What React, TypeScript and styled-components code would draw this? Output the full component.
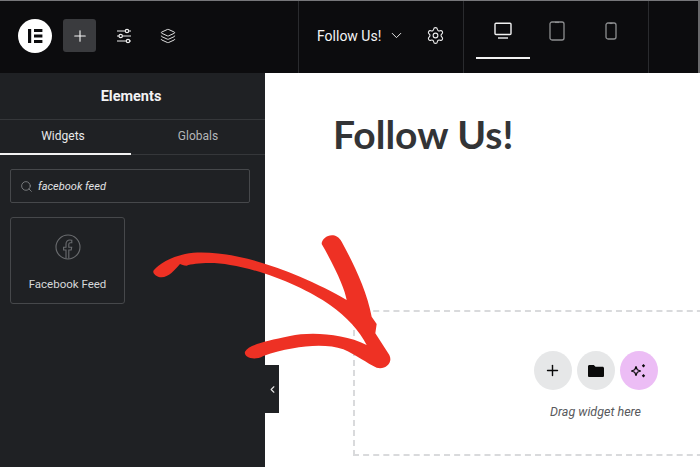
import React from "react";
import styled, { createGlobalStyle } from "styled-components";
import { Plus, Layers, Settings, ChevronDown, ChevronLeft, Search } from "lucide-react";

const Global = createGlobalStyle`
  html, body { margin: 0; padding: 0; width: 700px; height: 467px; overflow: hidden; background: #fff; }
  * { box-sizing: border-box; }
  body { font-family: Roboto, "Liberation Sans", sans-serif; }
`;

const Page = styled.div`
  position: relative;
  width: 700px;
  height: 467px;
  display: flex;
  flex-direction: column;
  overflow: hidden;
`;
const TopBar = styled.header`
  height: 73px;
  flex: none;
  display: flex;
  background: #0c0c0e;
  border-top: 1px solid #77777a;
  border-right: 2px solid #6a6a6c;
  color: #fff;
`;
const Section = styled.div<{ $w: number }>`
  width: ${(p) => p.$w}px;
  flex: none;
  display: flex;
  align-items: center;
  padding-bottom: 3px;
  border-right: 1px solid #2a2b2e;
`;
const LogoSection = styled(Section)`
  padding-left: 18px;
`;
const Logo = styled.div`
  width: 34px;
  height: 34px;
  border-radius: 50%;
  background: #fff;
  color: #0c0c0e;
  flex: none;
  margin-right: 11px;
  display: flex;
`;
const AddButton = styled.div`
  width: 33px;
  height: 33px;
  border-radius: 3px;
  background: #3a3b3e;
  display: flex;
  align-items: center;
  justify-content: center;
  margin-right: 20px;
`;
const ToolIcon = styled.div`
  display: flex;
  margin-right: 28px;
`;
const DocSection = styled(Section)`
  padding-left: 18px;
`;
const DocTitle = styled.span`
  font-size: 14px;
  color: #f4f4f5;
  margin-right: 7px;
`;
const DocCaret = styled.div`
  display: flex;
  margin-right: 21px;
`;
const DeviceSection = styled(Section)`
  padding: 0 0 0 12px;
  align-items: stretch;
`;
const DeviceTab = styled.div<{ $active?: boolean }>`
  width: 54px;
  display: flex;
  align-items: center;
  justify-content: center;
  padding-top: 3px;
  margin-bottom: 14px;
  border-bottom: 2px solid ${(p) => (p.$active ? "#f2f2f2" : "transparent")};
`;
const Body = styled.div`
  flex: 1;
  display: flex;
  min-height: 0;
`;
const Panel = styled.aside`
  width: 265px;
  flex: none;
  background: #1f2124;
  display: flex;
  flex-direction: column;
`;
const PanelTitle = styled.div`
  height: 47px;
  flex: none;
  display: flex;
  align-items: center;
  justify-content: center;
  padding-right: 3px;
  font-size: 14.5px;
  font-weight: 700;
  color: #f3f3f4;
  border-bottom: 1px solid #35373a;
`;
const Tabs = styled.div`
  height: 35px;
  flex: none;
  display: flex;
  border-bottom: 1px solid #35373a;
`;
const Tab = styled.div<{ $active?: boolean }>`
  width: ${(p) => (p.$active ? "131px" : "134px")};
  padding-right: ${(p) => (p.$active ? "5px" : "0")};
  flex: none;
  height: 35px;
  display: flex;
  align-items: center;
  justify-content: center;
  font-size: 12px;
  padding-bottom: 1px;
  color: ${(p) => (p.$active ? "#e8e9ea" : "#b4b6b9")};
  border-bottom: 2px solid ${(p) => (p.$active ? "#f2f2f2" : "transparent")};
`;
const SearchBox = styled.div`
  margin: 14px 15px 0 10px;
  height: 34px;
  border: 1px solid #46484b;
  border-radius: 2px;
  display: flex;
  align-items: center;
  padding-left: 9px;
  color: #8f9194;
  gap: 5px;
`;
const SearchText = styled.span`
  font-size: 11px;
  font-style: italic;
  color: #e2e3e5;
`;
const WidgetCard = styled.div`
  margin: 14px 0 0 10px;
  width: 115px;
  height: 87px;
  border: 1px solid #46484b;
  border-radius: 3px;
  display: flex;
  flex-direction: column;
  align-items: center;
  padding-top: 16px;
`;
const WidgetLabel = styled.div`
  margin-top: 17px;
  font-size: 11.5px;
  color: #d6d8da;
`;
const Canvas = styled.main`
  flex: 1;
  background: #fff;
  display: flex;
  flex-direction: column;
  min-width: 0;
`;
const Heading = styled.h1`
  margin: 38px 0 0 68px;
  font-family: Lato, sans-serif;
  font-weight: 700;
  font-size: 39px;
  line-height: 47px;
  color: #333436;
`;
const DropZone = styled.div`
  margin: 152px 0 0 88px;
  height: 146px;
  width: 360px;
  border: 2px dashed #d9dadc;
  display: flex;
  padding: 39px 0 0 178px;
`;
const DropCluster = styled.div`
  width: 125px;
  display: flex;
  flex-direction: column;
  align-items: center;
`;
const RoundRow = styled.div`
  display: flex;
  gap: 5px;
`;
const RoundButton = styled.div<{ $bg: string }>`
  width: 38px;
  height: 39px;
  border-radius: 50%;
  background: ${(p) => p.$bg};
  display: flex;
  align-items: center;
  justify-content: center;
  color: #0a0a0a;
`;
const DropHint = styled.div`
  margin-top: 14px;
  font-size: 12.500px;
  font-style: italic;
  color: #58595c;
`;
const Collapse = styled.div`
  position: absolute;
  left: 265px;
  top: 365px;
  width: 14px;
  height: 48px;
  background: #1f2124;
  display: flex;
  align-items: center;
  justify-content: center;
  color: #e8e8e8;
`;
const ArrowArt = styled.svg`
  position: absolute;
  left: 150px;
  top: 220px;
  width: 260px;
  height: 170px;
  pointer-events: none;
`;

const ElementorMark = () => (
  <svg width="34" height="34" viewBox="0 0 34 34" fill="currentColor">
    <rect x="10" y="10" width="3.2" height="14" />
    <rect x="16" y="10" width="8.400" height="3" />
    <rect x="16" y="15.500" width="8.400" height="3" />
    <rect x="16" y="21" width="8.400" height="3" />
  </svg>
);
const SlidersIcon = () => (
  <svg width="16" height="16" viewBox="0 0 16 16" fill="#0c0c0e" stroke="#ececec" strokeWidth="1.200">
    <path d="M1 3h14M1 8h14M1 13h14" />
    <circle cx="11" cy="3" r="1.700" />
    <circle cx="4.700" cy="8" r="1.700" />
    <circle cx="12" cy="13" r="1.700" />
  </svg>
);
const Desktop = () => (
  <svg width="18" height="18" viewBox="0 0 18 18" fill="none" stroke="#f2f2f2" strokeWidth="1.400">
    <rect x="1" y="1.300" width="16" height="11.200" rx="1" />
    <path d="M4 16h10" />
  </svg>
);
const TabletIcon = () => (
  <svg width="16" height="20" viewBox="0 0 16 20" fill="none" stroke="#8d8e90" strokeWidth="1.300">
    <rect x="1" y="1" width="14" height="18" rx="2" />
    <path d="M6 1.400h4" />
  </svg>
);
const PhoneIcon = () => (
  <svg width="12" height="18" viewBox="0 0 12 18" fill="none" stroke="#8d8e90" strokeWidth="1.300">
    <rect x="1" y="1" width="10" height="16" rx="2" />
    <path d="M4.500 1.400h3" />
  </svg>
);
const FacebookOutline = () => (
  <svg width="26" height="26" viewBox="0 0 26 26" fill="none" stroke="#6a6c6f" strokeWidth="1.100">
    <circle cx="13" cy="13" r="12" />
    <path d="M11 24.600V16H8.600v-2.800H11V10c0-2.600 1.500-4 3.800-4 .8 0 1.600.1 2 .2v2.500h-1.400c-1.200 0-1.600.6-1.600 1.500v3h2.900l-.5 2.800H13.800v8.600" />
  </svg>
);
const FolderIcon = () => (
  <svg width="16" height="14" viewBox="0 0 16 14" fill="currentColor">
    <path d="M1.500 1h4.300l1.700 1.800h7c.8 0 1.500.7 1.500 1.400v7.800c0 .7-.7 1-1.500 1H1.500C.7 13 0 12.700 0 12V2.400C0 1.600.7 1 1.500 1z" />
  </svg>
);
const SparkIcon = () => (
  <svg width="16" height="16" viewBox="0 0 16 16" fill="currentColor">
    <path
      d="M5 3.500 6.300 6.700 9.500 8 6.300 9.300 5 12.500 3.700 9.300 .5 8 3.700 6.700z"
      fill="none"
      stroke="currentColor"
      strokeWidth="1.200"
      strokeLinejoin="round"
    />
    <path d="M12.500 1l1.700 1.700-1.700 1.700-1.700-1.700z" />
    <path d="M12.500 11l1.700 1.700-1.700 1.700-1.700-1.700z" />
  </svg>
);

export default function App() {
  return (
    <Page>
      <Global />
      <TopBar>
        <LogoSection $w={299}>
          <Logo>
            <ElementorMark />
          </Logo>
          <AddButton>
            <Plus size={18} strokeWidth={1.500} color="#f5f5f5" />
          </AddButton>
          <ToolIcon>
            <SlidersIcon />
          </ToolIcon>
          <ToolIcon>
            <Layers size={16} strokeWidth={1.400} color="#ececec" />
          </ToolIcon>
        </LogoSection>
        <DocSection $w={165}>
          <DocTitle>Follow Us!</DocTitle>
          <DocCaret>
            <ChevronDown size={17} strokeWidth={1.400} color="#e8e8e8" />
          </DocCaret>
          <Settings size={19} strokeWidth={1.400} color="#ececec" />
        </DocSection>
        <DeviceSection $w={185}>
          <DeviceTab $active>
            <Desktop />
          </DeviceTab>
          <DeviceTab>
            <TabletIcon />
          </DeviceTab>
          <DeviceTab>
            <PhoneIcon />
          </DeviceTab>
        </DeviceSection>
      </TopBar>
      <Body>
        <Panel>
          <PanelTitle>Elements</PanelTitle>
          <Tabs>
            <Tab $active>Widgets</Tab>
            <Tab>Globals</Tab>
          </Tabs>
          <SearchBox>
            <Search size={13} strokeWidth={1.400} />
            <SearchText>facebook feed</SearchText>
          </SearchBox>
          <WidgetCard>
            <FacebookOutline />
            <WidgetLabel>Facebook Feed</WidgetLabel>
          </WidgetCard>
        </Panel>
        <Canvas>
          <Heading>Follow Us!</Heading>
          <DropZone>
            <DropCluster>
              <RoundRow>
                <RoundButton $bg="#e6e7e8">
                  <Plus size={17} strokeWidth={2} />
                </RoundButton>
                <RoundButton $bg="#e6e7e8">
                  <FolderIcon />
                </RoundButton>
                <RoundButton $bg="#ecbdf5">
                  <SparkIcon />
                </RoundButton>
              </RoundRow>
              <DropHint>Drag widget here</DropHint>
            </DropCluster>
          </DropZone>
        </Canvas>
      </Body>
      <Collapse>
        <ChevronLeft size={11} strokeWidth={2.400} />
      </Collapse>
      <ArrowArt viewBox="0 0 780 510">
        <path
          fill="#ee3124"
          d="M12 150C30 130 70 105 130 98C230 92 340 125 450 170C500 192 550 215 590 240C585 210 560 150 515 72C515 50 555 30 575 65C610 130 650 210 665 290L680 312L676 340L718 405C730 430 705 450 680 443C650 430 620 405 580 388C520 368 430 378 340 408C310 425 280 410 285 395C295 375 340 365 420 348C480 335 580 340 650 375C630 335 590 290 540 255C470 205 340 150 240 135C190 125 130 130 110 137C100 137 95 133 90 132C75 150 55 172 35 172C15 172 5 155 12 150Z"
        />
      </ArrowArt>
    </Page>
  );
}
